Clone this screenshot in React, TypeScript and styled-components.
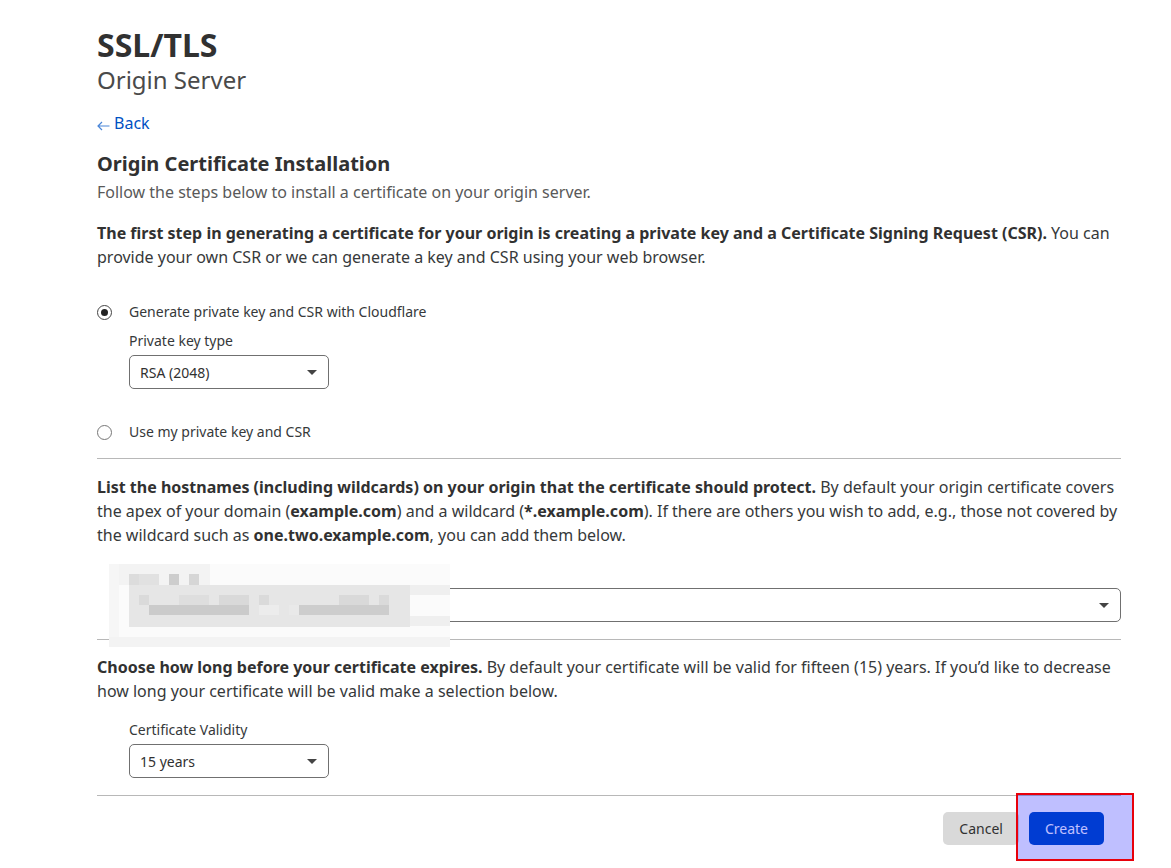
import React from "react";
import styled, { createGlobalStyle } from "styled-components";

const Global = createGlobalStyle`
  html, body { margin: 0; padding: 0; background: #fff; }
  body { font-family: "Noto Sans", "Open Sans", sans-serif; color: #313131; }
  * { box-sizing: border-box; }
`;

const Page = styled.div`
  position: relative;
  width: 1171px;
  min-height: 868px;
  padding: 25px 0 20px 97px;
`;

const Content = styled.div`
  width: 1024px;
  display: flex;
  flex-direction: column;
`;

const Title = styled.h1`
  margin: 0;
  font-size: 32px;
  line-height: 40px;
  font-weight: 700;
  color: #313131;
`;

const Subtitle = styled.div`
  font-size: 24px;
  line-height: 32px;
  color: #4a4a4a;
  margin-top: -1px;
`;

const BackLink = styled.a`
  margin-top: 15px;
  display: inline-flex;
  align-items: center;
  gap: 4px;
  align-self: flex-start;
  font-size: 16px;
  line-height: 24px;
  color: #0051c3;
  text-decoration: none;
  svg { margin-top: 5px; }
`;

const SectionTitle = styled.h2`
  margin: 15px 0 0;
  font-size: 20px;
  line-height: 28px;
  font-weight: 700;
  color: #313131;
`;

const Lead = styled.p`
  margin: 2px 0 0;
  font-size: 16px;
  line-height: 24px;
  color: #595959;
`;

const Para = styled.p<{ $top?: number }>`
  margin: ${(p) => p.$top ?? 16}px 0 0;
  font-size: 16px;
  line-height: 24px;
  color: #36393a;
  b { font-weight: 700; color: #313131; }
`;

const RadioRow = styled.label<{ $top: number }>`
  margin-top: ${(p) => p.$top}px;
  display: flex;
  align-items: center;
  gap: 17px;
  font-size: 14px;
  line-height: 20px;
  color: #36393a;
`;

const RadioDot = styled.span<{ $checked?: boolean }>`
  width: 15px;
  height: 15px;
  border-radius: 50%;
  border: 1px solid ${(p) => (p.$checked ? "#444" : "#777")};
  display: flex;
  align-items: center;
  justify-content: center;
  &::after {
    content: "";
    width: 7px;
    height: 7px;
    border-radius: 50%;
    background: ${(p) => (p.$checked ? "#222" : "transparent")};
  }
`;

const Field = styled.div<{ $top: number }>`
  margin-top: ${(p) => p.$top}px;
  padding-left: 32px;
  display: flex;
  flex-direction: column;
  gap: 4px;
`;

const FieldLabel = styled.span`
  font-size: 14px;
  line-height: 20px;
  color: #36393a;
`;

const Select = styled.div<{ $width?: string }>`
  width: ${(p) => p.$width ?? "200px"};
  height: 34px;
  border: 1px solid #707070;
  border-radius: 5px;
  display: flex;
  align-items: center;
  justify-content: space-between;
  padding: 0 10px 0 10px;
  font-size: 14px;
  color: #313131;
`;

const Caret = styled.span`
  width: 0;
  height: 0;
  border-left: 5px solid transparent;
  border-right: 5px solid transparent;
  border-top: 5px solid #444;
  margin-right: 1px;
`;

const Rule = styled.hr<{ $top: number }>`
  margin: ${(p) => p.$top}px 0 0;
  border: 0;
  border-top: 1px solid #b8b8b8;
  height: 0;
`;

const Actions = styled.div`
  margin-top: 16px;
  padding-right: 17px;
  display: flex;
  justify-content: flex-end;
  gap: 10px;
`;

const Button = styled.button<{ $primary?: boolean }>`
  height: 33px;
  padding: 0 16px;
  border: 0;
  border-radius: 5px;
  font-family: inherit;
  font-size: 14px;
  background: ${(p) => (p.$primary ? "#0051c3" : "#d9d9d9")};
  color: ${(p) => (p.$primary ? "#fff" : "#313131")};
`;

const Redaction = styled.svg`
  position: absolute;
  left: 109px;
  top: 564px;
`;

const Highlight = styled.div`
  position: absolute;
  left: 1016px;
  top: 793px;
  width: 118px;
  height: 68px;
  border: 2px solid #e8000b;
  background: rgba(0, 0, 255, 0.25);
`;

const BackArrow = () => (
  <svg width="13" height="10" viewBox="0 0 13 10" fill="none" stroke="#4a86d8" strokeWidth="1.2">
    <path d="M12.5 5H1.2M5 1L1 5l4 4" />
  </svg>
);

const cells: [number, number, number, number, string][] = [
  [0, 0, 341, 83, "#fbfbfb"],
  [0, 0, 10, 83, "#f6f6f6"],
  [10, 0, 91, 21, "#f3f3f3"],
  [20, 10, 10, 11, "#dcdcdc"],
  [30, 10, 20, 11, "#e1e1e1"],
  [60, 10, 10, 11, "#cdcdcd"],
  [80, 10, 10, 11, "#d6d6d6"],
  [20, 21, 281, 42, "#e6e6e6"],
  [301, 21, 40, 10, "#efefef"],
  [301, 52, 40, 10, "#efefef"],
  [30, 31, 10, 10, "#dadada"],
  [70, 31, 30, 10, "#dedede"],
  [110, 31, 30, 10, "#d9d9d9"],
  [150, 31, 10, 10, "#dadada"],
  [230, 31, 30, 10, "#d9d9d9"],
  [270, 31, 10, 10, "#dadada"],
  [40, 41, 100, 10, "#cbcbcb"],
  [150, 41, 20, 10, "#ececec"],
  [180, 41, 10, 10, "#e9e9e9"],
  [190, 41, 90, 10, "#cdcdcd"],
  [0, 73, 341, 10, "#f3f3f3"],
];

export default function App() {
  return (
    <Page>
      <Global />
      <Content>
        <Title>SSL/TLS</Title>
        <Subtitle>Origin Server</Subtitle>
        <BackLink href="#">
          <BackArrow />
          Back
        </BackLink>
        <SectionTitle>Origin Certificate Installation</SectionTitle>
        <Lead>Follow the steps below to install a certificate on your origin server.</Lead>
        <Para $top={17}>
          <b>
            The first step in generating a certificate for your origin is creating a private key and a
            Certificate Signing Request (CSR).
          </b>{" "}
          You can provide your own CSR or we can generate a key and CSR using your web browser.
        </Para>
        <RadioRow $top={33}>
          <RadioDot $checked />
          Generate private key and CSR with Cloudflare
        </RadioRow>
        <Field $top={9}>
          <FieldLabel>Private key type</FieldLabel>
          <Select>
            RSA (2048)
            <Caret />
          </Select>
        </Field>
        <RadioRow $top={33}>
          <RadioDot />
          Use my private key and CSR
        </RadioRow>
        <Rule $top={16} />
        <Para>
          <b>List the hostnames (including wildcards) on your origin that the certificate should protect.</b>{" "}
          By default your origin certificate covers the apex of your domain (<b>example.com</b>) and a
          wildcard (<b>*.example.com</b>). If there are others you wish to add, e.g., those not covered by the
          wildcard such as <b>one.two.example.com</b>, you can add them below.
        </Para>
        <Field $top={17}>
          <FieldLabel>Hostnames</FieldLabel>
          <Select $width="992px">
            <span />
            <Caret />
          </Select>
        </Field>
        <Rule $top={17} />
        <Para $top={15}>
          <b>Choose how long before your certificate expires.</b> By default your certificate will be valid
          for fifteen (15) years. If you’d like to decrease how long your certificate will be valid make a
          selection below.
        </Para>
        <Field $top={17}>
          <FieldLabel>Certificate Validity</FieldLabel>
          <Select>
            15 years
            <Caret />
          </Select>
        </Field>
        <Rule $top={17} />
        <Actions>
          <Button>Cancel</Button>
          <Button $primary>Create</Button>
        </Actions>
      </Content>
      <Redaction width="341" height="83" viewBox="0 0 341 83">
        {cells.map(([x, y, w, h, c], i) => (
          <rect key={i} x={x} y={y} width={w} height={h} fill={c} />
        ))}
      </Redaction>
      <Highlight />
    </Page>
  );
}
